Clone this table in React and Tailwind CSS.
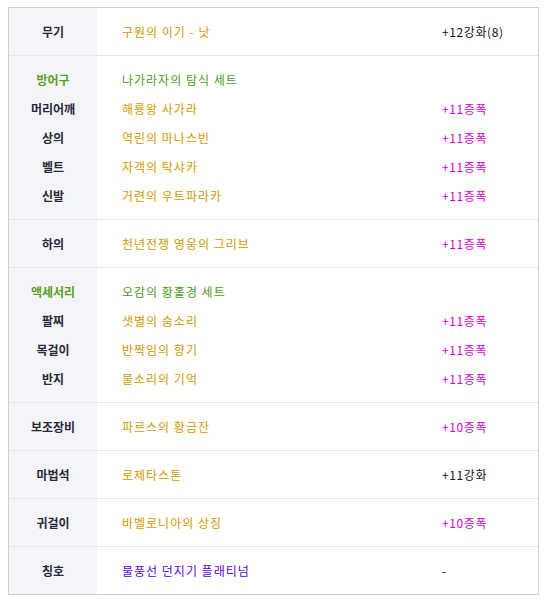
const GOLD = "text-[#cf9a00]";
const SET = "text-[#4a9a1c]";
const AMP = "text-[#d800d8]";
const ENH = "text-[#111]";

const groups = [
  [{ label: "무기", item: "구원의 이기 - 낫", itemColor: GOLD, value: "+12강화(8)", valueColor: ENH }],
  [
    { label: "방어구", labelSet: true, item: "나가라자의 탐식 세트", itemColor: SET },
    { label: "머리어깨", item: "해룡왕 사가라", itemColor: GOLD, value: "+11증폭", valueColor: AMP },
    { label: "상의", item: "역린의 마나스빈", itemColor: GOLD, value: "+11증폭", valueColor: AMP },
    { label: "벨트", item: "자객의 탁샤카", itemColor: GOLD, value: "+11증폭", valueColor: AMP },
    { label: "신발", item: "거련의 우트파라카", itemColor: GOLD, value: "+11증폭", valueColor: AMP },
  ],
  [{ label: "하의", item: "천년전쟁 영웅의 그리브", itemColor: GOLD, value: "+11증폭", valueColor: AMP }],
  [
    { label: "액세서리", labelSet: true, item: "오감의 황홀경 세트", itemColor: SET },
    { label: "팔찌", item: "샛별의 숨소리", itemColor: GOLD, value: "+11증폭", valueColor: AMP },
    { label: "목걸이", item: "반짝임의 향기", itemColor: GOLD, value: "+11증폭", valueColor: AMP },
    { label: "반지", item: "물소리의 기억", itemColor: GOLD, value: "+11증폭", valueColor: AMP },
  ],
  [{ label: "보조장비", item: "파르스의 황금잔", itemColor: GOLD, value: "+10증폭", valueColor: AMP }],
  [{ label: "마법석", item: "로제타스톤", itemColor: GOLD, value: "+11강화", valueColor: ENH }],
  [{ label: "귀걸이", item: "바벨로니아의 상징", itemColor: GOLD, value: "+10증폭", valueColor: AMP }],
  [{ label: "칭호", item: "물풍선 던지기 플래티넘", itemColor: "text-[#5a00d8]", value: "-", valueColor: ENH }],
];

export default function App() {
  return (
    <div
      className="pt-[7px] pl-[8px] bg-white min-h-screen text-[12px]"
      style={{ fontFamily: '"Noto Sans CJK KR", "Noto Sans", sans-serif' }}
    >
      <div className="w-[531px] border border-[#cfcfd6]">
        {groups.map((rows, gi) => (
          <div
            key={gi}
            className={gi < groups.length - 1 ? "border-b border-[#e6e6ea]" : ""}
          >
            {rows.map((r, i) => {
              const pad =
                (i === 0 ? "pt-[9px] " : "") + (i === rows.length - 1 ? "pb-[9px]" : "");
              return (
                <div key={i} className="flex">
                  <div className={`w-[88px] shrink-0 bg-[#f4f5f9] ${pad}`}>
                    <div
                      className={`h-[29px] flex items-center justify-center font-bold ${
                        r.labelSet ? "text-[#5a9e1e]" : "text-[#2a2838]"
                      }`}
                    >
                      {r.label}
                    </div>
                  </div>
                  <div className={`w-[345px] shrink-0 pl-[25px] ${pad}`}>
                    <div className={`h-[29px] flex items-center tracking-[1px] ${r.itemColor}`}>
                      {r.item}
                    </div>
                  </div>
                  <div className={`flex-1 ${pad}`}>
                    <div
                      className={`h-[29px] flex items-center tracking-[0.6px] ${r.valueColor || ""}`}
                    >
                      {r.value || ""}
                    </div>
                  </div>
                </div>
              );
            })}
          </div>
        ))}
      </div>
    </div>
  );
}
